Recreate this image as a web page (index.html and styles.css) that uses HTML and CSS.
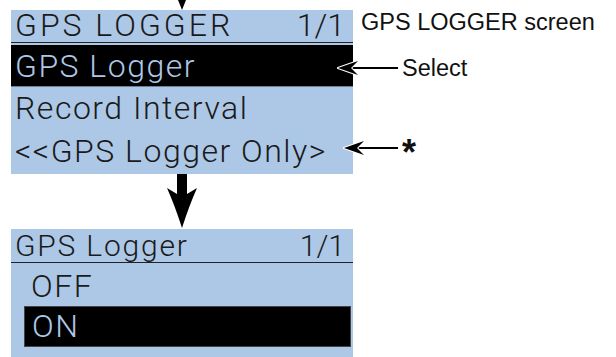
FILE: index.html
```html
<!DOCTYPE html>
<html lang="en">
<head>
    <meta charset="UTF-8">
    <title>GPS Logger</title>
    <link rel="stylesheet" href="styles.css">
</head>
<body>

    <div class="figure">
        <!-- mũi tên nhỏ phía trên -->
        <svg class="pointer" width="342" height="10" viewBox="0 0 342 10">
            <polygon points="167,0 175,0 171,10" fill="#000"/>
        </svg>

        <!-- Màn hình GPS LOGGER -->
        <div class="screen-grid">
            <div class="lcd head"><span class="wide">GPS LOGGER</span><span class="page">1/1</span></div>
            <div class="note title">GPS LOGGER screen</div>

            <div class="lcd row selected">GPS Logger</div>
            <div class="note callout select">
                <svg width="61" height="16" viewBox="0 0 61 16">
                    <rect x="12" y="7" width="49" height="2" fill="#000"/>
                    <path d="M1 8 L21 1 L14 8 L21 15 Z" fill="#000" stroke="#fff" stroke-width="2" paint-order="stroke"/>
                </svg>
                <span>Select</span>
            </div>

            <div class="lcd row">Record Interval</div>
            <div class="note"></div>

            <div class="lcd row last">&lt;&lt;GPS Logger Only&gt;</div>
            <div class="note callout star">
                <svg width="55" height="16" viewBox="0 0 55 16">
                    <rect x="12" y="7" width="43" height="2" fill="#000"/>
                    <path d="M1 8 L21 1 L14 8 L21 15 Z" fill="#000" stroke="#fff" stroke-width="2" paint-order="stroke"/>
                </svg>
                <span>*</span>
            </div>
        </div>

        <!-- mũi tên lớn -->
        <svg class="drop" width="342" height="55" viewBox="0 0 342 55">
            <path d="M166 0 H176 V20 L186 14 Q178 32 171 54 Q164 32 156 14 L166 20 Z" fill="#000"/>
        </svg>

        <!-- Màn hình GPS Logger -->
        <div class="screen">
            <div class="lcd head small"><span>GPS Logger</span><span class="page">1/1</span></div>
            <div class="lcd option">OFF</div>
            <div class="lcd option picked">ON</div>
        </div>
    </div>

</body>
</html>
```

FILE: styles.css
```css
/* màn hình LCD và chú thích */
body {
    margin: 0;
    background-color: #fff;
    font-family: "Liberation Sans", Arial, sans-serif;
}

.figure {
    padding-left: 11px;
}

.pointer,
.drop {
    display: block;
}

.screen-grid {
    display: grid;
    grid-template-columns: 342px 1fr;
}

.lcd {
    background-color: #adc8e6;
    color: #1a1a1a;
    font-family: Roboto, "Liberation Sans", sans-serif;
    font-weight: 300;
    font-size: 32px;
    letter-spacing: 1.5px;
    white-space: nowrap;
}

.head {
    display: flex;
    justify-content: space-between;
    height: 32px;
    line-height: 30px;
    padding: 0 8px 0 4px;
    border-bottom: 1px solid #222;
}

.wide {
    letter-spacing: 3px;
}

.page {
    letter-spacing: 0;
}

.row {
    height: 43px;
    line-height: 43px;
    padding-left: 4px;
}

.selected {
    height: 41px;
    margin-top: 2px;
    background-color: #000;
    color: #adc8e6;
    box-shadow: 0 -2px 0 #adc8e6;
    border-bottom: 1px solid #6d7f93;
}

.last {
    height: 44px;
}

.note {
    font-size: 23.5px;
    color: #111;
    white-space: nowrap;
}

.title {
    padding-left: 8px;
    line-height: 22px;
    align-self: start;
    margin-top: 1px;
}

.callout {
    display: flex;
    align-items: center;
    line-height: 24px;
}

.callout svg {
    flex-shrink: 0;
}

.callout span {
    margin-left: 4px;
}

.select {
    margin-left: -16px;
    padding-top: 6px;
}

.star {
    margin-left: -10px;
    align-items: flex-start;
    align-self: start;
}

.star svg {
    margin-top: 10px;
}

.star span {
    font-size: 36px;
    font-weight: bold;
    margin-top: 11px;
}

.screen {
    width: 342px;
    background-color: #adc8e6;
    padding-bottom: 10px;
}

.small {
    font-size: 30px;
    height: 33px;
    line-height: 33px;
    letter-spacing: 1.8px;
}

.option {
    height: 39px;
    line-height: 39px;
    padding-top: 4px;
    padding-left: 20px;
}

.picked {
    height: 39px;
    line-height: 39px;
    padding-top: 0;
    margin: 0 2px 0 13px;
    padding-left: 7px;
    background-color: #000;
    color: #adc8e6;
    border: 1px solid #444;
}
```
